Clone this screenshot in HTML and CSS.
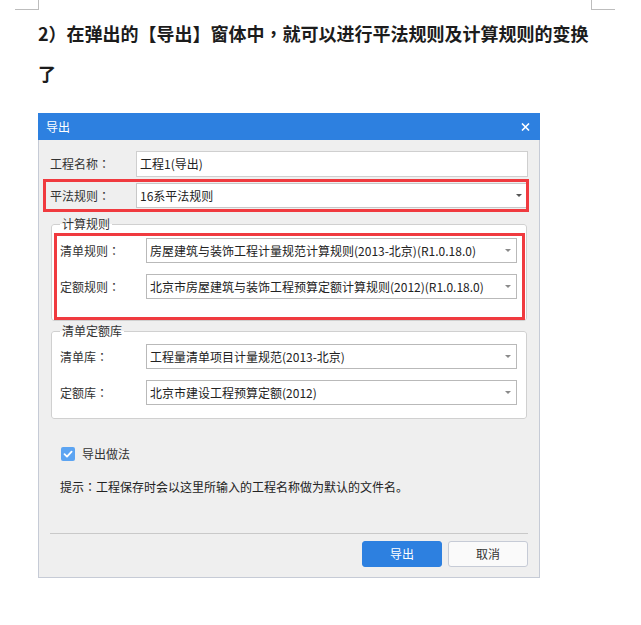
FILE: index.html
```html
<!DOCTYPE html>
<html lang="zh-CN">
<head>
<meta charset="utf-8">
<title>导出</title>
<link rel="stylesheet" href="styles.css">
</head>
<body>
<div class="page">
  <div class="corners"><span class="corner corner-l"></span><span class="corner corner-r"></span></div>
  <h2 class="heading" lang="zh-TW">2）在弹出的【导出】窗体中，就可以进行平法规则及计算规则的变换了</h2>

  <div class="dialog">
    <div class="titlebar">
      <span class="title">导出</span>
      <svg class="close" width="9" height="8" viewBox="0 0 9 8"><path d="M1 0.5 L8 7.5 M8 0.5 L1 7.5" stroke="#fff" stroke-width="1.6" fill="none"/></svg>
    </div>
    <div class="body">
      <div class="row">
        <span class="label">工程名称<span class="p" lang="zh-TW">：</span></span>
        <div class="field field-input"><span class="value">工程1(导出)</span></div>
      </div>
      <div class="row row-hl">
        <span class="label">平法规则<span class="p" lang="zh-TW">：</span></span>
        <div class="field field-select field-wide"><span class="value">16系平法规则</span><span class="arrow arrow-dark"></span></div>
      </div>

      <fieldset class="group group-calc">
        <legend class="legend">计算规则</legend>
        <div class="hl-box">
          <div class="row">
            <span class="label">清单规则<span class="p" lang="zh-TW">：</span></span>
            <div class="field field-select field-sub"><span class="value">房屋建筑与装饰工程计量规范计算规则(2013-北京)(R1.0.18.0)</span><span class="arrow"></span></div>
          </div>
          <div class="row row-gap">
            <span class="label">定额规则<span class="p" lang="zh-TW">：</span></span>
            <div class="field field-select field-sub"><span class="value">北京市房屋建筑与装饰工程预算定额计算规则(2012)(R1.0.18.0)</span><span class="arrow"></span></div>
          </div>
        </div>
      </fieldset>

      <fieldset class="group group-lib">
        <legend class="legend">清单定额库</legend>
        <div class="row">
          <span class="label">清单库<span class="p" lang="zh-TW">：</span></span>
          <div class="field field-select field-sub"><span class="value">工程量清单项目计量规范(2013-北京)</span><span class="arrow"></span></div>
        </div>
        <div class="row row-gap">
          <span class="label">定额库<span class="p" lang="zh-TW">：</span></span>
          <div class="field field-select field-sub"><span class="value">北京市建设工程预算定额(2012)</span><span class="arrow"></span></div>
        </div>
      </fieldset>

      <div class="check-row">
        <span class="checkbox"><svg width="14" height="14" viewBox="0 0 14 14"><path d="M3.5 7.2 L6 9.6 L10.6 4.6" stroke="#fff" stroke-width="1.8" fill="none" stroke-linecap="round" stroke-linejoin="round"/></svg></span>
        <span class="check-label">导出做法</span>
      </div>
      <p class="hint">提示<span class="p" lang="zh-TW">：</span>工程保存时会以这里所输入的工程名称做为默认的文件名。</p>

      <div class="footer">
        <button class="btn btn-primary">导出</button>
        <button class="btn btn-default">取消</button>
      </div>
    </div>
  </div>
</div>
</body>
</html>
```

FILE: styles.css
```css
* { box-sizing: border-box; }

body {
  margin: 0;
  background: #ffffff;
  font-family: "Noto Sans CJK SC", "Noto Sans", sans-serif;
  color: #333333;
}

.page { width: 641px; }

.p { font-family: "Noto Sans CJK TC", "Noto Sans CJK SC", sans-serif; }

.corners {
  display: flex;
  height: 10px;
  padding-left: 15px;
}
.corner {
  width: 24px;
  height: 10px;
  border-bottom: 1px solid #bdbdbd;
}
.corner-l { border-right: 1px solid #bdbdbd; }
.corner-r {
  margin-left: auto;
  margin-right: 26px;
  border-left: 1px solid #bdbdbd;
}

.heading {
  margin: 3px 0 0;
  padding: 0 49px 0 38px;
  font-family: "Noto Sans CJK TC", "Noto Sans CJK SC", sans-serif;
  font-size: 18px;
  line-height: 40px;
  font-weight: 700;
  color: #1c1c1c;
}

.dialog {
  margin: 20px 0 0 38px;
  width: 502px;
  background: #efefef;
  border: 1px solid #c6cbd6;
  border-top: 0;
  font-size: 12px;
}

.titlebar {
  height: 27px;
  margin: 0 -1px;
  background: #2d80e0;
  display: flex;
  align-items: center;
  padding: 0 10px 0 8px;
}
.title {
  color: #ffffff;
  font-size: 12px;
  line-height: 16px;
  flex: 1;
}
.close { display: block; margin-top: 1px; }

.body {
  padding: 11px 11px 10px;
}

.row {
  display: flex;
  align-items: center;
}
.row-gap { margin-top: 11px; }

.label {
  width: 86px;
  flex: none;
  line-height: 16px;
  color: #333333;
}

.field {
  flex: 1;
  height: 25px;
  background: #ffffff;
  border: 1px solid #c8c8c8;
  display: flex;
  align-items: center;
  padding: 0 5px 0 3px;
  min-width: 0;
}
.field-input { height: 26px; border-color: #cfcfcf; }
.field-sub { border-color: #b9b9b9; }
.value {
  flex: 1;
  line-height: 16px;
  color: #222222;
  white-space: nowrap;
  overflow: hidden;
}
.arrow {
  width: 0;
  height: 0;
  border-left: 3px solid transparent;
  border-right: 3px solid transparent;
  border-top: 3px solid #8a8a8a;
  flex: none;
}
.arrow-dark { border-top-color: #555555; }

.row-hl {
  margin: 5px 2px 0 -4px;
  padding: 1px 0 1px 4px;
  outline: 3px solid #f03a3f;
}
.field-wide { margin-right: -2px; }

.group {
  margin: 7px 1px 0;
  padding: 4px 9px 3px 8px;
  border: 1px solid #d0d0d0;
  border-radius: 3px;
  background: #ffffff;
  min-width: 0;
}
.legend {
  padding: 0 2px;
  line-height: 16px;
  font-size: 12px;
  color: #333333;
}
.group-lib {
  margin-top: 2px;
  padding: 5px 9px 13px 8px;
}

.hl-box {
  margin: 0 -5px 0 -3px;
  padding: 2px 5px 18px 3px;
  outline: 3px solid #f03a3f;
}

.check-row {
  display: flex;
  align-items: center;
  margin-top: 28px;
  padding-left: 11px;
  height: 14px;
}
.checkbox {
  width: 14px;
  height: 14px;
  border-radius: 2px;
  background: #5ca4f2;
  display: block;
}
.checkbox svg { display: block; }
.check-label {
  margin-left: 7px;
  line-height: 16px;
  color: #333333;
}

.hint {
  margin: 18px 0 0;
  padding-left: 10px;
  line-height: 16px;
  color: #222222;
}

.footer {
  margin-top: 38px;
  border-top: 1px solid #c9c9c9;
  padding-top: 7px;
  display: flex;
  justify-content: flex-end;
  gap: 6px;
}
.btn {
  width: 80px;
  height: 26px;
  border-radius: 3px;
  font-family: "Noto Sans CJK SC", "Noto Sans", sans-serif;
  font-size: 12px;
  line-height: 16px;
  padding: 0;
  cursor: pointer;
}
.btn-primary {
  background: #2d80e0;
  border: 1px solid #2d80e0;
  color: #ffffff;
}
.btn-default {
  background: #fafafa;
  border: 1px solid #c6cbd6;
  color: #333333;
}
```
